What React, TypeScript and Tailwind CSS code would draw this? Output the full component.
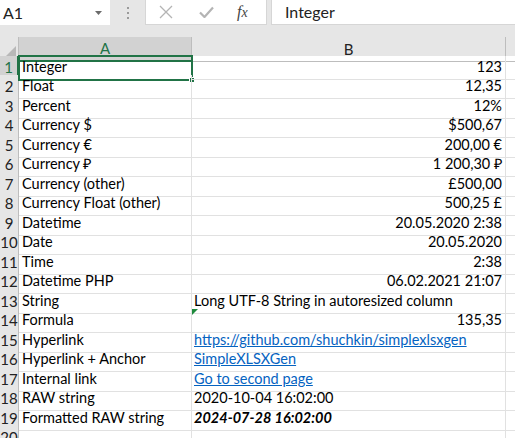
import React from "react";

type Row = { a: string; b: string; kind: "r" | "l" | "link" | "bi"; flag?: boolean };

const rows: Row[] = [
  { a: "Integer", b: "123", kind: "r" },
  { a: "Float", b: "12,35", kind: "r" },
  { a: "Percent", b: "12%", kind: "r" },
  { a: "Currency $", b: "$500,67", kind: "r" },
  { a: "Currency €", b: "200,00 €", kind: "r" },
  { a: "Currency ₽", b: "1 200,30 ₽", kind: "r" },
  { a: "Currency (other)", b: "£500,00", kind: "r" },
  { a: "Currency Float (other)", b: "500,25 £", kind: "r" },
  { a: "Datetime", b: "20.05.2020 2:38", kind: "r" },
  { a: "Date", b: "20.05.2020", kind: "r" },
  { a: "Time", b: "2:38", kind: "r" },
  { a: "Datetime PHP", b: "06.02.2021 21:07", kind: "r" },
  { a: "String", b: "Long UTF-8 String in autoresized column", kind: "l" },
  { a: "Formula", b: "135,35", kind: "r", flag: true },
  { a: "Hyperlink", b: "https://github.com/shuchkin/simplexlsxgen", kind: "link" },
  { a: "Hyperlink + Anchor", b: "SimpleXLSXGen", kind: "link" },
  { a: "Internal link", b: "Go to second page", kind: "link" },
  { a: "RAW string", b: "2020-10-04 16:02:00", kind: "l" },
  { a: "Formatted RAW string", b: "2024-07-28 16:02:00", kind: "bi" },
  { a: "", b: "", kind: "l" },
];

export default function App() {
  return (
    <div
      className="w-[515px] h-[438px] overflow-hidden bg-white text-[#000] relative"
      style={{ fontFamily: "Lato, 'Liberation Sans', sans-serif" }}
    >
      {/* formula bar */}
      <div className="flex h-[37px] bg-[#e6e6e6] items-start">
        <div className="w-[110px] h-[25px] bg-white flex items-center justify-between pl-[3px] pr-[8px]">
          <span className="text-[16px] text-[#222]">A1</span>
          <svg width="7" height="4" viewBox="0 0 7 4">
            <path d="M0 0 L7 0 L3.5 4 Z" fill="#6b6b6b" />
          </svg>
        </div>
        <div className="w-[35px] h-[25px] flex flex-col items-center justify-center gap-[3px]">
          <div className="w-[2px] h-[2px] bg-[#9a9a9a]" />
          <div className="w-[2px] h-[2px] bg-[#9a9a9a]" />
          <div className="w-[2px] h-[2px] bg-[#9a9a9a]" />
        </div>
        <div className="w-[122px] h-[25px] bg-white flex items-center border border-[#d6d6d6] border-t-0">
          <svg width="14" height="14" viewBox="0 0 14 14" className="ml-[13px]">
            <path d="M1 1 L13 13 M13 1 L1 13" stroke="#b4b4b4" strokeWidth="1.3" />
          </svg>
          <svg width="15" height="12" viewBox="0 0 15 12" className="ml-[26px]">
            <path d="M1 6.5 L5.5 11 L14 1.5" stroke="#b4b4b4" strokeWidth="2.2" fill="none" />
          </svg>
          <span
            className="ml-[23px] text-[16px] italic text-[#444]"
            style={{ fontFamily: "'Liberation Serif', 'DejaVu Serif', serif" }}
          >
            f<span className="text-[14px]">x</span>
          </span>
        </div>
        <div className="flex-1 ml-[4px] h-[25px] bg-white flex items-center pl-[13px] border-l border-b border-[#d6d6d6]">
          <span className="text-[16px] text-[#222]">Integer</span>
        </div>
      </div>

      {/* column headers */}
      <div className="grid grid-cols-[19px_173px_314px_1fr] h-[19px] bg-[#e6e6e6]">
        <div className="border-r border-b border-[#bdbdbd] flex items-end justify-end pr-[2px] pb-[2px]">
          <svg width="13" height="13" viewBox="0 0 13 13">
            <path d="M13 0 L13 13 L0 13 Z" fill="#b8b8b8" />
          </svg>
        </div>
        <div className="bg-[#d2d2d2] border-r border-[#bdbdbd] border-b-2 border-b-[#217346] flex items-center justify-center text-[15px] text-[#217346]">
          A
        </div>
        <div className="border-r border-b border-[#bdbdbd] flex items-center justify-center text-[15px] text-[#222]">
          B
        </div>
        <div className="border-b border-[#bdbdbd]" />
      </div>

      {/* rows */}
      {rows.map((r, i) => {
        const n = i + 1;
        const h = i % 2 === 0 ? "h-[19px]" : "h-[20px]";
        const sel = n === 1;
        let bCls = "text-[14.5px] whitespace-nowrap pl-[2px] pr-[3px] flex items-end pb-[1px] border-r border-b border-[#e1e1e1] relative";
        if (r.kind === "r") bCls += " justify-end";
        if (r.kind === "link") bCls += " text-[#0563c1] underline";
        if (r.kind === "bi") bCls += " font-bold italic";
        return (
          <div key={n} className={`grid grid-cols-[19px_173px_314px_1fr] ${h}`}>
            <div
              className={
                sel
                  ? "bg-[#d2d2d2] border-r-2 border-r-[#217346] border-b border-b-[#bdbdbd] flex items-center justify-center text-[15px] text-[#217346]"
                  : "bg-[#e6e6e6] border-r border-b border-[#bdbdbd] flex items-center justify-center text-[15px] text-[#222]"
              }
            >
              {n}
            </div>
            <div className="relative text-[14.5px] whitespace-nowrap pl-[3px] flex items-end pb-[1px] border-r border-b border-[#e1e1e1]">
              {r.a}
              {sel && (
                <div className="absolute left-[-1px] top-[-1px] right-[-2px] bottom-[-2px] border-2 border-[#217346]">
                  <div className="absolute right-[-4px] bottom-[-4px] w-[6px] h-[6px] bg-[#217346] border border-white" />
                </div>
              )}
            </div>
            <div className={bCls}>
              {r.flag && (
                <svg width="6" height="6" viewBox="0 0 6 6" className="absolute left-0 top-0">
                  <path d="M0 0 L6 0 L0 6 Z" fill="#1e8a3c" />
                </svg>
              )}
              {r.b}
            </div>
            <div className="border-b border-[#e1e1e1]" />
          </div>
        );
      })}
    </div>
  );
}
